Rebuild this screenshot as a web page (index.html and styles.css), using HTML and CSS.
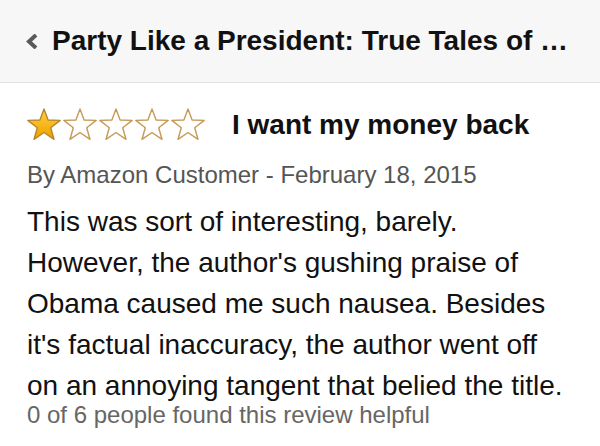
FILE: index.html
```html
<!DOCTYPE html>
<html>
<head>
<meta charset="utf-8">
<link rel="stylesheet" href="styles.css">
</head>
<body>
<header class="bar">
  <svg class="chev" width="14" height="15" viewBox="0 0 14 15"><path d="M11 1 L4 7.5 L11 14" fill="none" stroke="#5a5a5a" stroke-width="4"/></svg>
  <h1 class="bar-title">Party Like a President: True Tales of …</h1>
</header>
<main class="review">
  <div class="head">
    <div class="stars">
      <svg width="36" height="33" viewBox="0 0 36 33"><defs><linearGradient id="g" x1="0" y1="0" x2="0" y2="1"><stop offset="0" stop-color="#ffd040"/><stop offset="1" stop-color="#eea000"/></linearGradient></defs><polygon points="18,1 22.1,12 34.2,12.4 24.7,19.7 28,31.3 18,24.5 8,31.3 11.3,19.7 1.8,12.4 13.9,12" fill="url(#g)" stroke="#b8862a" stroke-width="1.4" stroke-linejoin="round"/></svg>
      <svg width="36" height="33" viewBox="0 0 36 33"><polygon points="18,1 22.1,12 34.2,12.4 24.7,19.7 28,31.3 18,24.5 8,31.3 11.3,19.7 1.8,12.4 13.9,12" fill="#fff" stroke="#c49a55" stroke-width="1.4" stroke-linejoin="round"/></svg>
      <svg width="36" height="33" viewBox="0 0 36 33"><polygon points="18,1 22.1,12 34.2,12.4 24.7,19.7 28,31.3 18,24.5 8,31.3 11.3,19.7 1.8,12.4 13.9,12" fill="#fff" stroke="#c49a55" stroke-width="1.4" stroke-linejoin="round"/></svg>
      <svg width="36" height="33" viewBox="0 0 36 33"><polygon points="18,1 22.1,12 34.2,12.4 24.7,19.7 28,31.3 18,24.5 8,31.3 11.3,19.7 1.8,12.4 13.9,12" fill="#fff" stroke="#c49a55" stroke-width="1.4" stroke-linejoin="round"/></svg>
      <svg width="36" height="33" viewBox="0 0 36 33"><polygon points="18,1 22.1,12 34.2,12.4 24.7,19.7 28,31.3 18,24.5 8,31.3 11.3,19.7 1.8,12.4 13.9,12" fill="#fff" stroke="#c49a55" stroke-width="1.4" stroke-linejoin="round"/></svg>
    </div>
    <h2 class="rtitle">I want my money back</h2>
  </div>
  <p class="byline">By Amazon Customer - February 18, 2015</p>
  <p class="body">This was sort of interesting, barely. However, the author's gushing praise of Obama caused me such nausea. Besides it's factual inaccuracy, the author went off on an annoying tangent that belied the title.</p>
  <p class="helpful">0 of 6 people found this review helpful</p>
</main>
</body>
</html>
```
FILE: styles.css
```css
html, body { margin: 0; padding: 0; background: #fff; }
body { font-family: "Liberation Sans", Arial, sans-serif; width: 600px; height: 446px; overflow: hidden; }
.bar {
  height: 83px;
  background: #f7f7f7;
  border-bottom: 1px solid #e2e2e2;
  display: flex;
  align-items: center;
  padding-left: 25px;
  box-sizing: border-box;
}
.chev { margin-right: 13px; margin-top: 0; }
.bar-title { margin: 0; font-size: 28px; font-weight: bold; color: #111; white-space: nowrap; }
.review { padding: 0 27px; }
.head { display: flex; align-items: center; margin-top: 24px; }
.stars { display: flex; margin-left: -1px; }
.rtitle { margin: 2px 0 0 26px; font-size: 28px; font-weight: bold; color: #111; }
.byline { margin: 20px 0 0; font-size: 24px; line-height: 28px; color: #555; }
.body { margin: 12px 0 0; font-size: 28px; line-height: 41px; color: #111; }
.helpful { margin: 0; font-size: 24px; line-height: 18px; color: #666; }
```
